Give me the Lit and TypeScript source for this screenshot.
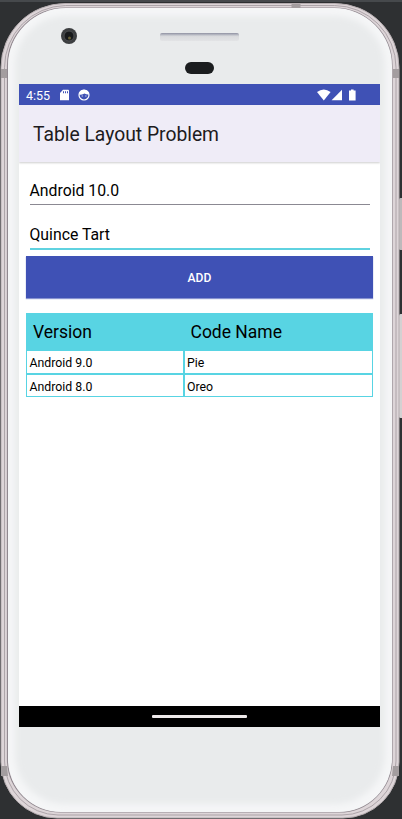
import { LitElement, html, css } from "lit";
import { customElement, property } from "lit/decorators.js";

@customElement("status-bar")
class StatusBar extends LitElement {
  static styles = css`
    :host { display: flex; align-items: center; height: 21px; background: #3f51b5; color: #fff; padding: 0 24px 0 7px; box-sizing: border-box; }
    .time { font: 12.5px/21px Roboto, sans-serif; padding-top: 1px; width: 34px; }
    svg { display: block; fill: #fff; }
    .face { margin-left: 9px; }
    .gap { flex: 1; }
    .battery { margin-left: 6px; }
  `;
  render() {
    return html`
      <span class="time">4:55</span>
      <svg width="9" height="12" viewBox="0 0 9 12"><path d="M3 .8H8.2Q9 .8 9 1.6V11.2H0V4Z"/><path d="M3 2.2h1v2H3zM5 2.2h1v2H5zM7 2.2h1v2H7z" fill="#3f51b5"/></svg>
      <svg class="face" width="12" height="12" viewBox="0 0 12 12"><circle cx="6" cy="6" r="5" fill="none" stroke="#fff" stroke-width="1.2"/><path d="M1.200 5.500Q1.500 1 6 .8Q10.500 1 10.800 5.500Q8.500 5.700 6.500 4.500Q4.500 6 1.200 5.500Z"/><path d="M3.700 6.500h1v1h-1zM7.400 6.500h1v1h-1z"/></svg>
      <span class="gap"></span>
      <svg width="14" height="12" viewBox="0 0 14 12"><path d="M0 3Q6.800-2 13.600 3L6.800 11.400Z"/></svg>
      <svg width="12" height="12" viewBox="0 0 12 12"><path d="M.6 11.200L11 .8V11.200Z"/></svg>
      <svg class="battery" width="7" height="12" viewBox="0 0 7 12"><path d="M0 1.600h2V.4h2.600v1.200h2V11.400H0Z"/></svg>
    `;
  }
}

@customElement("text-field")
class TextField extends LitElement {
  @property() value = "";
  @property({ type: Boolean, reflect: true }) focused = false;
  static styles = css`
    :host { display: block; height: 44px; box-sizing: border-box; padding: 0 3.5px; }
    .line { height: 33px; line-height: 39px; font-family: Roboto, sans-serif; font-size: 15.8px; color: #000; border-bottom: 1px solid #8b8992; white-space: nowrap; }
    :host([focused]) .line { border-bottom: 2px solid #5fd2e0; }
  `;
  render() {
    return html`<div class="line">${this.value}</div>`;
  }
}

@customElement("app-root")
class AppRoot extends LitElement {
  rows = [["Android 9.0", "Pie"], ["Android 8.0", "Oreo"]];
  static styles = css`
    :host { display: block; position: relative; width: 402px; height: 819px; overflow: hidden; background: #2e3032; font-family: Roboto, sans-serif; }
    .frame { display: block; position: absolute; inset: 0; }
    .screen { position: relative; display: flex; flex-direction: column; width: 361px; height: 643px; margin: 84px 0 0 19px; background: #fff; overflow: hidden; }
    .appbar { height: 57px; padding-left: 14px; background: #efecf7; color: #1d1b20; font-size: 19.3px; line-height: 59px; box-shadow: 0 1px 2px #0003; white-space: nowrap; }
    .content { flex: 1; padding: 9px 7px 0; }
    .add { height: 42px; margin-top: -3px; background: #3f51b5; color: #fff; font-size: 12.1px; font-weight: 500; line-height: 45px; text-align: center; box-shadow: 0 1px 1px #3f51b5a0; }
    .table { margin-top: 15px; }
    .row { display: grid; grid-template-columns: 157.500px 189.500px; }
    .head { background: #58d4e3; height: 37px; line-height: 38px; font-size: 17.5px; }
    .head span { padding-left: 7px; }
    .cell { box-sizing: border-box; height: 23.500px; border: 1px solid #58d4e3; padding-left: 2.5px; font-size: 12.3px; line-height: 24px; }
    .nav { height: 21px; background: #000; display: flex; justify-content: center; align-items: center; }
    .pill { width: 95px; height: 3px; border-radius: 1px; background: #eee9ea; }
  `;
  render() {
    return html`
      <svg class="frame" width="402" height="819" viewBox="0 0 402 819">
        <defs>
          <filter id="soft"><feGaussianBlur stdDeviation="3"/></filter>
          <linearGradient id="slot" x2="0" y2="1"><stop stop-color="#8f91a2"/><stop offset=".3" stop-color="#c6c8cf"/><stop offset=".45" stop-color="#dadbde"/><stop offset="1" stop-color="#e2e3e5"/></linearGradient>
          <clipPath id="face"><path d="M66 8H334A58 58 0 0 1 392 66V759A53 53 0 0 1 339 812H61A53 53 0 0 1 8 759V66A58 58 0 0 1 66 8Z"/></clipPath>
        </defs>
        <path d="M0 .5H402" stroke="#46494c" stroke-width="3"/>
        <rect x="399" y="198" width="5" height="52" rx="1.500" fill="#bdb9bb"/>
        <rect x="399" y="314" width="5" height="104" rx="1.500" fill="#d4d1d2"/>
        <path d="M65 3.500H335A64 64 0 0 1 399 67.500V762A56 56 0 0 1 343 818H57A56 56 0 0 1 1 762V67.500A64 64 0 0 1 65 3.500Z" fill="#ddd5d8" stroke="#b5adb0"/>
        <path d="M65.500 5.500H334.500A62 62 0 0 1 396 67.500V761A54 54 0 0 1 342 815H58A54 54 0 0 1 4.500 761V67.500A62 62 0 0 1 65.500 5.500Z" fill="none" stroke="#a1989d" stroke-width=".8"/>
        <path d="M66 8H334A58 58 0 0 1 392 66V759A53 53 0 0 1 339 812H61A53 53 0 0 1 7.500 759V66A58 58 0 0 1 66 8Z" fill="none" stroke="#918990" stroke-width="1.200"/>
        <path d="M291.500 4v4h9v-4M1 69v9h6v-9M393 69v9h6v-9M1 766v10h7l-1-10M399 766v10h-7l1-10" fill="#a39d9f"/>
        <g clip-path="url(#face)">
          <rect x="7" y="8" width="385" height="804" fill="#f5f6f7"/>
          <rect x="15" y="16" width="370" height="788" rx="50" fill="#e9ebec" filter="url(#soft)"/>
        </g>
        <circle cx="69" cy="36" r="8" fill="#3c3e40"/>
        <circle cx="69" cy="36" r="5" fill="#17191b" stroke="#4c4e51"/>
        <circle cx="69.500" cy="38" r="1.500" fill="#655e35"/>
        <rect x="160" y="33" width="79" height="8" rx="2" fill="url(#slot)"/>
        <rect x="185" y="62" width="29" height="12" rx="6" fill="#1b1d1f"/>
      </svg>
      <div class="screen">
        <status-bar></status-bar>
        <div class="appbar">Table Layout Problem</div>
        <div class="content">
          <text-field .value=${"Android 10.0"}></text-field>
          <text-field focused .value=${"Quince Tart"}></text-field>
          <div class="add">ADD</div>
          <div class="table">
            <div class="row head"><span>Version</span><span>Code Name</span></div>
            ${this.rows.map((r) => html`<div class="row">${r.map((c) => html`<div class="cell">${c}</div>`)}</div>`)}
          </div>
        </div>
        <div class="nav"><div class="pill"></div></div>
      </div>
    `;
  }
}
